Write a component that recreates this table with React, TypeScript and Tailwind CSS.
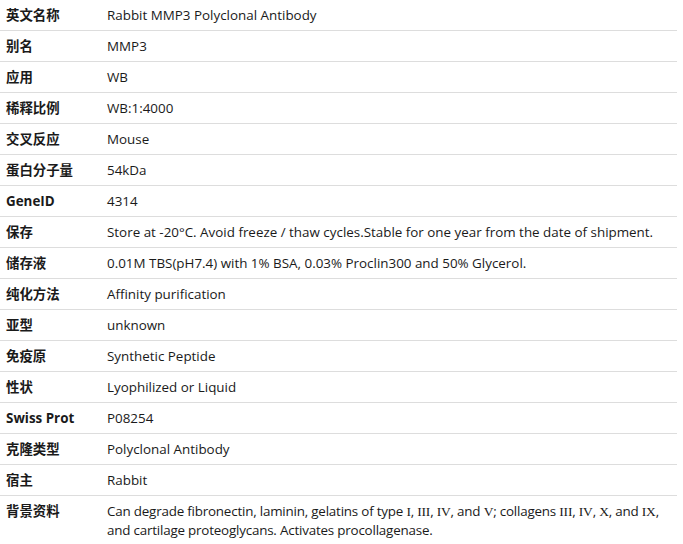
import type { ReactNode } from 'react';

// roman numerals show in a serif face in the source page
const R = ({ children }: { children: ReactNode }) => (
  <span style={{ fontFamily: '"Liberation Serif", serif' }} className="text-[13.5px]">
    {children}
  </span>
);

const rows: [string, ReactNode][] = [
  ['英文名称', 'Rabbit MMP3 Polyclonal Antibody'],
  ['别名', 'MMP3'],
  ['应用', 'WB'],
  ['稀释比例', 'WB:1:4000'],
  ['交叉反应', 'Mouse'],
  ['蛋白分子量', '54kDa'],
  ['GeneID', '4314'],
  ['保存', 'Store at -20°C. Avoid freeze / thaw cycles.Stable for one year from the date of shipment.'],
  ['储存液', '0.01M TBS(pH7.4) with 1% BSA, 0.03% Proclin300 and 50% Glycerol.'],
  ['纯化方法', 'Affinity purification'],
  ['亚型', 'unknown'],
  ['免疫原', 'Synthetic Peptide'],
  ['性状', 'Lyophilized or Liquid'],
  ['Swiss Prot', 'P08254'],
  ['克隆类型', 'Polyclonal Antibody'],
  ['宿主', 'Rabbit'],
  [
    '背景资料',
    <span className="tracking-[-0.2px]">
      Can degrade fibronectin, laminin, gelatins of type <R>I</R>, <R>III</R>, <R>IV</R>, and <R>V</R>; collagens{' '}
      <R>III</R>, <R>IV</R>, <R>X</R>, and <R>IX</R>, and cartilage proteoglycans. Activates procollagenase.
    </span>,
  ],
];

export default function App() {
  return (
    <div className="w-[683px] h-[544px] bg-white overflow-hidden">
      <div
        className="w-[677px] text-[13.4px] leading-[18px] text-[#1a1a1a]"
        style={{ fontFamily: '"Open Sans", "Noto Sans CJK SC", sans-serif' }}
      >
        {rows.map(([label, value], i) => (
          <div
            key={label}
            className={`grid grid-cols-[107px_1fr] py-[6px] ${i < rows.length - 1 ? 'border-b border-[#dddddd]' : ''}`}
          >
            <div className="pl-[6px] font-bold">{label}</div>
            <div>{value}</div>
          </div>
        ))}
      </div>
    </div>
  );
}
